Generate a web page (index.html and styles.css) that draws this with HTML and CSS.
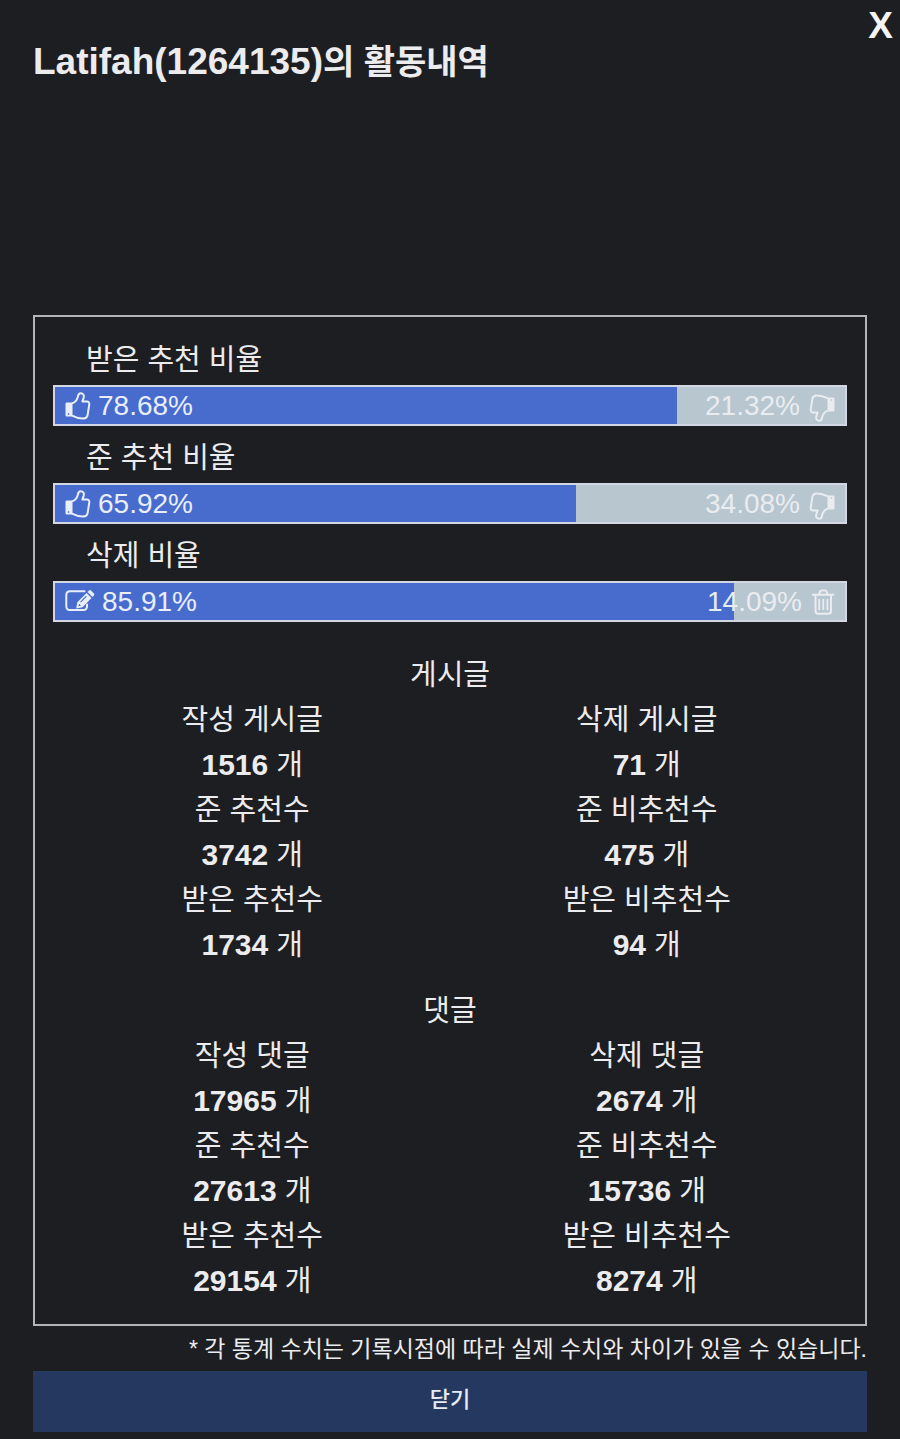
FILE: index.html
```html
<!DOCTYPE html>
<html lang="ko">
<head>
<meta charset="utf-8">
<meta name="viewport" content="width=device-width, initial-scale=1">
<title>Latifah(1264135)의 활동내역</title>
<link rel="stylesheet" href="styles.css">
</head>
<body>
<svg class="sprite" aria-hidden="true">
  <symbol id="thumb" viewBox="0 0 26 28">
    <path d="M1.800 10.500H7.500V24.500H1.800Q.5 24.500 .5 23.200V11.800Q.5 10.500 1.800 10.500ZM2.800 21.200V22.800H4.200V21.200Z" fill="currentColor" fill-rule="evenodd"/>
    <path d="M7 11.400C9.600 10.600 12 7.800 12.800 5C13.100 2.800 13.600 1.200 15.600 1.200C18.300 1.200 19.300 3.200 18.700 5.600L17.400 9.600H22.200C24 9.600 24.600 11.200 24.200 13L22.600 23.200C22.200 25.600 20.800 26.500 18.600 26.600C14.400 26.800 10.600 25.400 7 23.600" fill="none" stroke="currentColor" stroke-width="2" stroke-linejoin="round"/>
  </symbol>
  <symbol id="edit" viewBox="0 0 30 26">
    <path d="M19.500 2.200H5Q1.300 2.200 1.300 6V17.200Q1.300 21 5 21H18.200Q22 21 22 17.200V15.500" fill="none" stroke="currentColor" stroke-width="2" stroke-linecap="round"/>
    <path d="M21.500 4L26.500 9L17.500 18.200L11.200 19.600L12.300 13.200ZM14 14.800L13.500 17.300L16 16.800ZM21 6.800L15.200 12.700L16 13.500L21.800 7.600Z" fill="currentColor" fill-rule="evenodd"/>
    <path d="M22.500 3L24 1.500Q25 .6 26 1.500L28.900 4.400Q29.800 5.400 28.900 6.400L27.400 7.900Z" fill="currentColor"/>
  </symbol>
  <symbol id="trash" viewBox="0 0 24 26">
    <path d="M1 5.800H23.200M8 5.800L9 2.500Q9.400 1.500 10.400 1.500H14.200Q15.200 1.500 15.600 2.500L16.600 5.800M4.500 5.800V21.800Q4.500 24.800 7.200 24.800H17.300Q20 24.800 20 21.800V5.800" fill="none" stroke="currentColor" stroke-width="2"/>
    <path d="M8.200 10V21M12.300 10V21M16.400 10V21" fill="none" stroke="currentColor" stroke-width="1.800"/>
  </symbol>
</svg>
<main class="dialog">
  <button class="close-x" type="button" aria-label="X">X</button>
  <h1 class="title"><span class="user">Latifah(1264135)</span>의 활동내역</h1>

  <section class="panel">
    <h2 class="ratio-label">받은 추천 비율</h2>
    <div class="bar">
      <div class="fill" style="width:78.68%"></div>
      <span class="value"><svg class="icon thumb" aria-hidden="true"><use href="#thumb"/></svg>78.68%</span>
      <span class="value end">21.32%<svg class="icon thumb down" aria-hidden="true"><use href="#thumb"/></svg></span>
    </div>
    <h2 class="ratio-label">준 추천 비율</h2>
    <div class="bar">
      <div class="fill" style="width:65.92%"></div>
      <span class="value"><svg class="icon thumb" aria-hidden="true"><use href="#thumb"/></svg>65.92%</span>
      <span class="value end">34.08%<svg class="icon thumb down" aria-hidden="true"><use href="#thumb"/></svg></span>
    </div>
    <h2 class="ratio-label">삭제 비율</h2>
    <div class="bar">
      <div class="fill" style="width:85.91%"></div>
      <span class="value"><svg class="icon edit" aria-hidden="true"><use href="#edit"/></svg>85.91%</span>
      <span class="value end">14.09%<svg class="icon trash" aria-hidden="true"><use href="#trash"/></svg></span>
    </div>

    <section class="stats">
      <h2 class="stats-title">게시글</h2>
      <div class="grid">
        <dl class="stat"><dt>작성 게시글</dt><dd><b>1516</b> 개</dd></dl>
        <dl class="stat"><dt>삭제 게시글</dt><dd><b>71</b> 개</dd></dl>
        <dl class="stat"><dt>준 추천수</dt><dd><b>3742</b> 개</dd></dl>
        <dl class="stat"><dt>준 비추천수</dt><dd><b>475</b> 개</dd></dl>
        <dl class="stat"><dt>받은 추천수</dt><dd><b>1734</b> 개</dd></dl>
        <dl class="stat"><dt>받은 비추천수</dt><dd><b>94</b> 개</dd></dl>
      </div>
    </section>
    <section class="stats">
      <h2 class="stats-title">댓글</h2>
      <div class="grid">
        <dl class="stat"><dt>작성 댓글</dt><dd><b>17965</b> 개</dd></dl>
        <dl class="stat"><dt>삭제 댓글</dt><dd><b>2674</b> 개</dd></dl>
        <dl class="stat"><dt>준 추천수</dt><dd><b>27613</b> 개</dd></dl>
        <dl class="stat"><dt>준 비추천수</dt><dd><b>15736</b> 개</dd></dl>
        <dl class="stat"><dt>받은 추천수</dt><dd><b>29154</b> 개</dd></dl>
        <dl class="stat"><dt>받은 비추천수</dt><dd><b>8274</b> 개</dd></dl>
      </div>
    </section>
  </section>

  <p class="note">* 각 통계 수치는 기록시점에 따라 실제 수치와 차이가 있을 수 있습니다.</p>
  <button class="close" type="button">닫기</button>
</main>
</body>
</html>
```
FILE: styles.css
```css
* { box-sizing: border-box; }

body {
  margin: 0;
  background: #1d1e22;
  color: #ececee;
  font-family: "Liberation Sans", "Noto Sans CJK KR", sans-serif;
  font-size: 29px;
  line-height: 45px;
}

h1, h2, p, dl, dd { margin: 0; }

button {
  border: 0;
  font-family: inherit;
  cursor: pointer;
}

.sprite {
  position: absolute;
  width: 0;
  height: 0;
}

.dialog {
  position: relative;
  padding: 37px 33px 7px;
}

.close-x {
  position: absolute;
  top: 4px;
  right: 7px;
  padding: 0;
  background: none;
  color: #f4f4f5;
  font-size: 37px;
  font-weight: 700;
  line-height: 44px;
}

.title {
  margin-bottom: 228px;
  font-size: 34px;
  font-weight: 700;
  line-height: 50px;
}

.user {
  font-size: 37px;
  line-height: 1;
}

.panel {
  padding: 11px 18px 20px;
  border: 2px solid #b4b4b7;
}

.ratio-label {
  padding: 10px 33px 2px;
  font-size: 29px;
  font-weight: 400;
}

.bar {
  position: relative;
  display: flex;
  justify-content: space-between;
  height: 41px;
  padding: 0 10px;
  border: 2px solid #d3d7e4;
  background: #b7c6cf;
  font-size: 28px;
  line-height: 37px;
}

.fill {
  position: absolute;
  top: 0;
  bottom: 0;
  left: 0;
  background: #476ccd;
}

.value {
  position: relative;
  display: flex;
  align-items: center;
  gap: 7px;
  color: #e9eefa;
}

.value.end {
  gap: 9px;
  color: #eaecf0;
}

.icon { display: block; }
.thumb { width: 26px; height: 28px; }
.down { margin-top: 5px; transform: rotate(180deg); }
.edit { width: 30px; height: 26px; }
.trash { width: 24px; height: 26px; }

.stats { padding-top: 21px; }
.bar + .stats { padding-top: 31px; }

.stats-title {
  font-size: 29px;
  font-weight: 400;
  text-align: center;
}

.grid {
  display: grid;
  grid-template-columns: 1fr 1fr;
  padding: 0 3px 0 2px;
  text-align: center;
}

.stat b {
  font-size: 30px;
  line-height: 1;
}

.note {
  padding-top: 2px;
  font-size: 23px;
  line-height: 43px;
  text-align: right;
}

.close {
  display: block;
  width: 100%;
  padding: 6px 0 10px;
  background: #253860;
  color: #e6ebf6;
  font-size: 22px;
  font-weight: 500;
  line-height: 45px;
}
```
